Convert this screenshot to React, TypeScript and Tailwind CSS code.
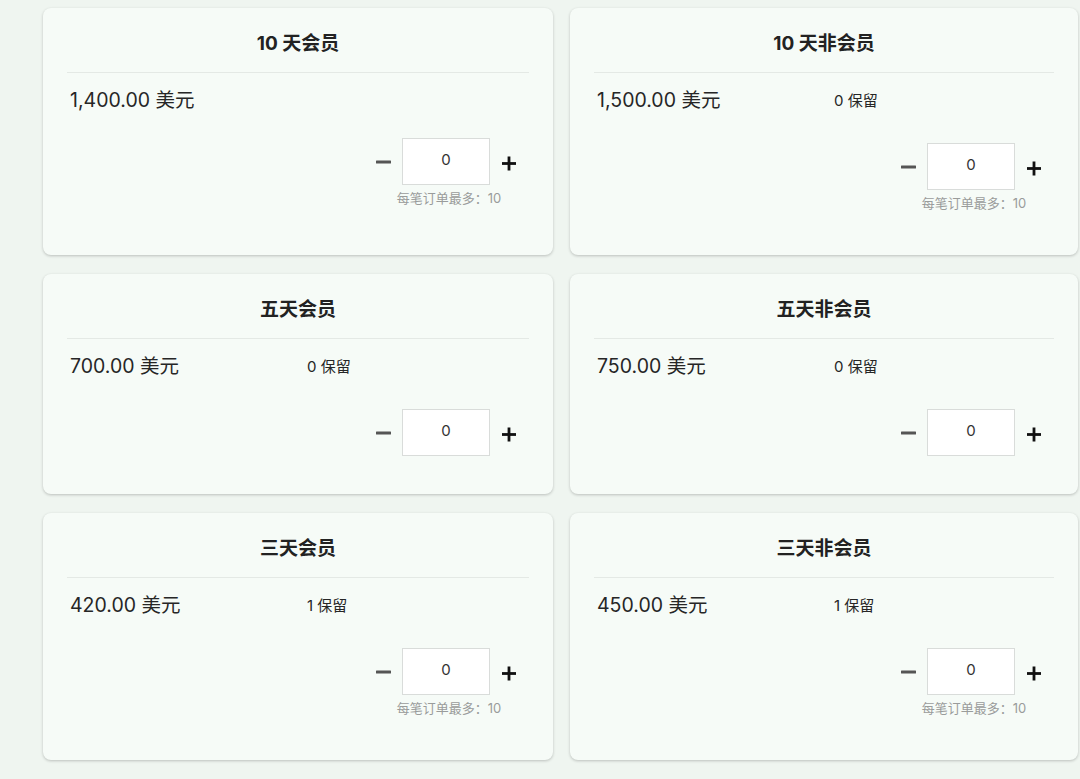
type Ticket = {
  title: string
  price: string
  reserved?: string
  hint: boolean
}

const rows: Ticket[][] = [
  [
    { title: "10 天会员", price: "1,400.00 美元", hint: true },
    { title: "10 天非会员", price: "1,500.00 美元", reserved: "0 保留", hint: true },
  ],
  [
    { title: "五天会员", price: "700.00 美元", reserved: "0 保留", hint: false },
    { title: "五天非会员", price: "750.00 美元", reserved: "0 保留", hint: false },
  ],
  [
    { title: "三天会员", price: "420.00 美元", reserved: "1 保留", hint: true },
    { title: "三天非会员", price: "450.00 美元", reserved: "1 保留", hint: true },
  ],
]

function Stepper({ hint }: { hint: boolean }) {
  return (
    <div className="flex flex-col items-center">
      <div className="flex items-center">
        <button className="w-[15px] h-[15px] flex items-center justify-center">
          <svg width="15" height="4" viewBox="0 0 15 4">
            <rect x="0" y="0.5" width="15" height="3" rx="0.5" fill="#555" />
          </svg>
        </button>
        <div className="ml-[11px] w-[88px] h-[47px] bg-white border border-[#d9dcda] flex items-center justify-center text-[15px] text-[#333] pb-[2px]">
          0
        </div>
        <button className="ml-[12px] w-[14px] h-[16px] flex items-center justify-center mt-[4px]">
          <svg width="15" height="15" viewBox="0 0 15 15">
            <rect x="0" y="6" width="15" height="3" fill="#111" />
            <rect x="6" y="0" width="3" height="15" fill="#111" />
          </svg>
        </button>
      </div>
      {hint && (
        <div className="h-[27px] pt-[5px] leading-4 text-[13px] text-[#9a9c9b] pl-[6px]">
          每笔订单最多：10
        </div>
      )}
    </div>
  )
}

function TicketCard({ t }: { t: Ticket }) {
  return (
    <div className="bg-[#f6fbf7] rounded-lg shadow-[0_1px_3px_rgba(0,0,0,0.22)] px-6 pt-6 pb-[38px] flex flex-col">
      {/* Title */}
      <div className="text-center text-[19px] leading-6 font-bold text-[#222]">{t.title}</div>
      <div className="mt-4 border-t border-[#e4e9e5]" />

      {/* Price row */}
      <div className="mt-4 flex items-center h-6">
        <div className="w-[240px] text-[19.5px] text-[#262626] pl-[3px]">{t.price}</div>
        {t.reserved && <div className="text-[15px] text-[#262626]">{t.reserved}</div>}
      </div>

      {/* Quantity */}
      <div className={`flex justify-end mr-[13px] ${t.reserved ? "mt-[30px]" : "mt-[25px]"}`}>
        <Stepper hint={t.hint} />
      </div>
    </div>
  )
}

export default function App() {
  return (
    <div
      className="min-h-[779px] bg-[#eff5f0] pl-[43px] pt-2 pb-6"
      style={{ fontFamily: 'Inter, "Noto Sans CJK SC", sans-serif' }}
    >
      <div className="grid grid-cols-[510px_508px] gap-x-[17px] gap-y-[19px]">
        {rows.flat().map((t, i) => (
          <TicketCard key={i} t={t} />
        ))}
      </div>
    </div>
  )
}
